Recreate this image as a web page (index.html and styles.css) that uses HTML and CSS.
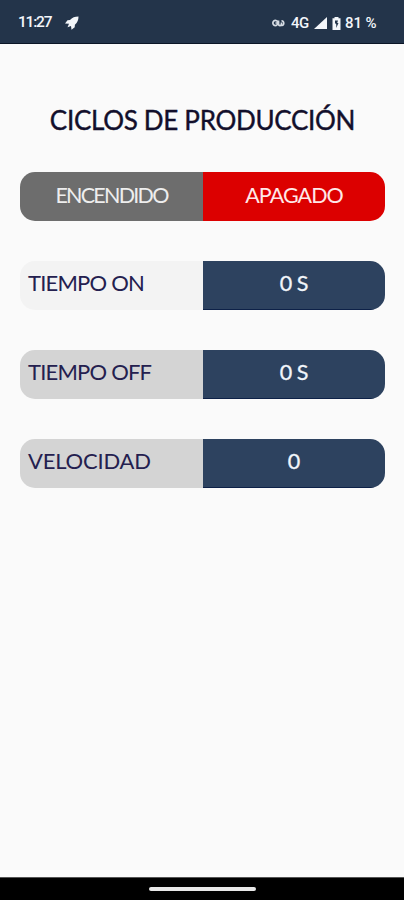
FILE: index.html
```html
<!DOCTYPE html>
<html lang="es">
<head>
<meta charset="utf-8">
<meta name="viewport" content="width=device-width, initial-scale=1">
<title>Ciclos de producción</title>
<link rel="stylesheet" href="styles.css">
</head>
<body>
<div class="screen">
  <header class="status">
    <span class="clock">11:27</span>
    <svg class="rocket" viewBox="0 0 14 14"><path d="M13.500.5C10 .5 7 1.500 5 4L2.500 4.200 0 7.500 4 7.800 2.500 11.300 6 9.900 6.500 13.800 9.700 11.300 9.900 8.800C12.500 6.500 13.500 4 13.500.5Z"/></svg>
    <svg class="vpn" viewBox="0 0 13 8"><path d="M6.500 4C5.500 2 4.700 1.300 3.500 1.300a2.600 2.600 0 0 0 0 5.300C5 6.600 5.600 5.500 6.300 4H3.500M6.500 1.500V4.500C6.500 7.200 9.500 7.200 9.500 4.500V3.500M9.500 6.300c3 .8 3-4.800 0-4.500"/></svg>
    <span class="net">4G</span>
    <svg class="signal" viewBox="0 0 13 12"><path d="M13 0V12H0Z"/></svg>
    <svg class="battery" viewBox="0 0 9 13"><path class="cell" d="M2.500 1.300V0h4v1.300H8.500V13H.5V1.300Z"/><path class="bolt" d="M3 3.500 6 3.500 5.200 6H6.500L4.200 11 4.300 7.500 3 6Z"/></svg>
    <span class="percent">81 %</span>
  </header>
  <main class="content">
    <h1 class="title">CICLOS DE PRODUCCIÓN</h1>
    <div class="row">
      <div class="cell-on">ENCENDIDO</div>
      <div class="cell-off">APAGADO</div>
    </div>
    <div class="row">
      <div class="label pale">TIEMPO ON</div>
      <div class="value">0 S</div>
    </div>
    <div class="row">
      <div class="label">TIEMPO OFF</div>
      <div class="value">0 S</div>
    </div>
    <div class="row">
      <div class="label speed">VELOCIDAD</div>
      <div class="value">0</div>
    </div>
  </main>
  <footer class="nav"><div class="handle"></div></footer>
</div>
</body>
</html>
```
FILE: styles.css
```css
* { box-sizing: border-box; }
body { margin: 0; font-family: Lato, "Open Sans", sans-serif; }
.screen { display: flex; flex-direction: column; width: 404px; height: 900px; background: #fafafa; overflow: hidden; }
.status { display: flex; align-items: center; height: 44px; flex: none; padding: 3px 26px 0 18px; background: #23344a; border-bottom: 1px solid #0b1526; color: #f3f6fa; font: 500 15px/1 Roboto, sans-serif; white-space: nowrap; }
.clock { width: 47px; font-size: 15.5px; letter-spacing: -1.2px; }
.rocket { width: 14px; height: 14px; fill: #f3f6fa; margin-right: auto; }
.vpn { width: 13px; height: 8px; fill: none; stroke: #d5dbe3; stroke-width: 1.7; margin-right: 6px; }
.net { width: 23px; font-size: 15px; letter-spacing: -.5px; }
.signal { width: 13px; height: 12px; fill: #f3f6fa; margin-right: 5px; }
.battery { width: 9px; height: 13px; margin-right: 4px; }
.cell { fill: #f3f6fa; }
.bolt { fill: #23344a; }
.percent { width: 33px; letter-spacing: -.1px; }
.content { flex: 1; padding: 57px 19px 0 20px; }
.title { margin: 0 0 33px; height: 38px; line-height: 38px; text-align: center; font-size: 26px; font-weight: 400; letter-spacing: -.3px; color: #120f2b; white-space: nowrap; -webkit-text-stroke: .4px #120f2b; }
.row { display: grid; grid-template-columns: 183px 182px; height: 49px; margin-bottom: 40px; border-radius: 15px; overflow: hidden; font-size: 22px; line-height: 45px; white-space: nowrap; }
.cell-on, .cell-off, .value { text-align: center; }
.cell-on { background: #6d6d6d; color: #eee; font-size: 21.5px; line-height: 46px; letter-spacing: -1.75px; }
.cell-off { background: #dc0000; color: #ffe8e8; font-size: 21.5px; line-height: 46px; letter-spacing: -.95px; }
.value { background: #2d425f; color: #f1f5fa; border-bottom: 1px solid #0d2148; font-size: 21.5px; word-spacing: -1px; -webkit-text-stroke: .3px #f1f5fa; }
.label { background: #d4d4d4; color: #24204f; padding-left: 8px; line-height: 44px; letter-spacing: -.8px; }
.pale { background: #f3f3f3; }
.speed { letter-spacing: -.2px; }
.nav { display: flex; justify-content: center; flex: none; height: 23px; padding-top: 9px; background: #000; border-top: 1px solid #555; }
.handle { width: 107px; height: 4px; border-radius: 2px; background: #e8e8e8; }
```
